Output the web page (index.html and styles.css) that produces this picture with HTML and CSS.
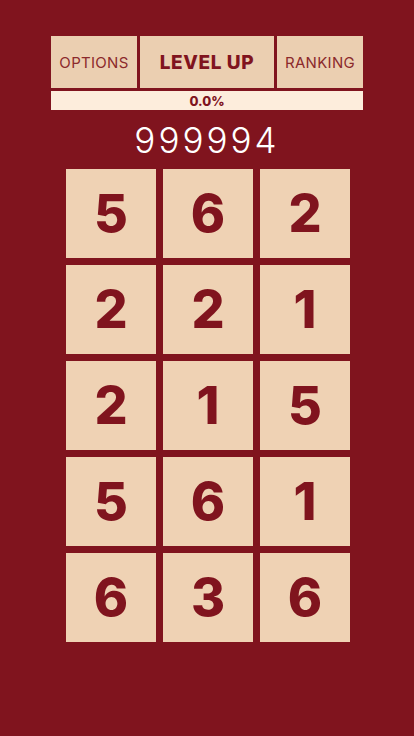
FILE: index.html
```html
<!DOCTYPE html>
<html>
<head>
<meta charset="utf-8">
<link rel="stylesheet" href="styles.css">
</head>
<body>
<div class="page">
  <div class="top">
    <div class="menu">
      <div class="btn side">OPTIONS</div>
      <div class="btn main">LEVEL UP</div>
      <div class="btn side">RANKING</div>
    </div>
    <div class="progress">0.0%</div>
    <div class="score">999994</div>
  </div>
  <div class="grid">
    <div class="tile">5</div><div class="tile">6</div><div class="tile">2</div>
    <div class="tile">2</div><div class="tile">2</div><div class="tile">1</div>
    <div class="tile">2</div><div class="tile">1</div><div class="tile">5</div>
    <div class="tile">5</div><div class="tile">6</div><div class="tile">1</div>
    <div class="tile">6</div><div class="tile">3</div><div class="tile">6</div>
  </div>
</div>
</body>
</html>
```
FILE: styles.css
```css
html, body {
  margin: 0;
  padding: 0;
  background: #80141e;
  height: 100%;
}
.page {
  width: 414px;
  height: 736px;
  display: flex;
  flex-direction: column;
  align-items: center;
  font-family: Inter, "Noto Sans", sans-serif;
}
.top {
  width: 312px;
  margin-top: 36px;
  display: flex;
  flex-direction: column;
}
.menu {
  display: flex;
  gap: 3px;
  height: 52px;
}
.btn {
  background: #ebcfb1;
  display: flex;
  align-items: center;
  justify-content: center;
}
.side {
  width: 86px;
  color: #8c2a2c;
  font-size: 15px;
  font-weight: 400;
  letter-spacing: 0.3px;
}
.main {
  flex: 1;
  color: #80141e;
  font-size: 19px;
  font-weight: 800;
  letter-spacing: 0.6px;
}
.progress {
  margin-top: 3px;
  height: 19px;
  background: #fdeddc;
  color: #80141e;
  font-size: 13px;
  font-weight: 800;
  display: flex;
  align-items: center;
  justify-content: center;
}
.score {
  margin-top: 8px;
  height: 44px;
  color: #fff;
  font-size: 35px;
  font-weight: 300;
  letter-spacing: 3px;
  text-align: center;
  line-height: 44px;
}
.grid {
  margin-top: 7px;
  display: grid;
  grid-template-columns: repeat(3, 90px);
  grid-auto-rows: 89px;
  column-gap: 7px;
  row-gap: 7px;
  margin-left: 2px;
}
.tile {
  background: #efd2b4;
  color: #80141e;
  font-size: 52px;
  font-weight: 800;
  display: flex;
  align-items: center;
  justify-content: center;
}
```
